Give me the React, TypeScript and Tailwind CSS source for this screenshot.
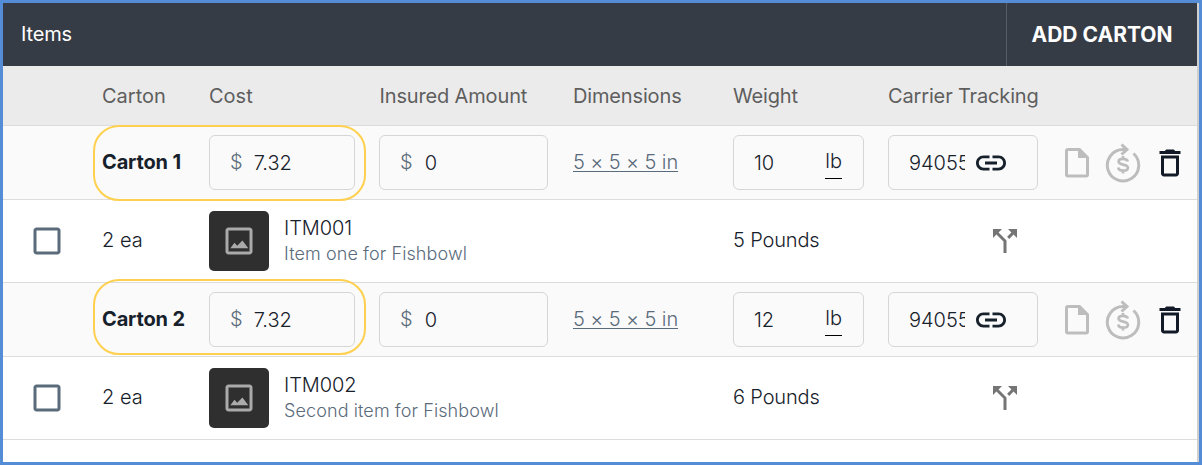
import React from "react";

const COLS = "grid grid-cols-[99px_107px_170px_194px_160px_155px_176px_1fr]";

function Icon({ d, className }: { d: string; className: string }) {
  return (
    <svg viewBox="0 0 24 24" width="36" height="36" fill="currentColor" className={`block shrink-0 ${className}`}>
      <path d={d} />
    </svg>
  );
}

const LINK =
  "M3.9 12c0-1.71 1.39-3.1 3.1-3.1h4V7H7c-2.76 0-5 2.24-5 5s2.24 5 5 5h4v-1.9H7c-1.71 0-3.1-1.39-3.1-3.1zM8 13h8v-2H8v2zm9-6h-4v1.9h4c1.71 0 3.1 1.39 3.1 3.1s-1.39 3.1-3.1 3.1h-4V17h4c2.76 0 5-2.24 5-5s-2.24-5-5-5z";
const SPLIT =
  "M14 4l2.29 2.29-2.88 2.88 1.42 1.42 2.88-2.88L20 10V4zm-4 0H4v6l2.29-2.29 4.71 4.7V20h2v-8.41l-5.29-5.3z";
const BOX =
  "M19 5v14H5V5h14m0-2H5c-1.1 0-2 .9-2 2v14c0 1.1.9 2 2 2h14c1.1 0 2-.9 2-2V5c0-1.1-.9-2-2-2z";
const MOUNTAINS = "M6.200 16.900L9 13.100l1.800 2.100 3.500-3.600 3.900 5.300z";
const TRASH =
  "M6 19c0 1.100.9 2 2 2h8c1.100 0 2-.9 2-2V7H6v12zM8 9h8v10H8V9zm7.500-5l-1-1h-5l-1 1H5v2h14V4h-3.500z";

function DocIcon() {
  return (
    <svg viewBox="0 0 26 32" width="26" height="32" fill="none" className="block text-[#bdbdbd]">
      <path d="M4 2.500h11.500L23.500 10.500V27.500a1.500 1.500 0 0 1-1.500 1.500H4a1.500 1.500 0 0 1-1.500-1.500V4A1.500 1.500 0 0 1 4 2.500z" stroke="currentColor" strokeWidth="3" />
      <path d="M14 1l11 10H14z" fill="currentColor" />
    </svg>
  );
}

function RefundIcon() {
  return (
    <svg viewBox="0 0 36 40" width="36" height="40" fill="none" stroke="currentColor" strokeWidth="3" className="block text-[#bdbdbd]">
      <path d="M28.500 10.500A15.700 15.700 0 1 1 18 6.500h4" />
      <path d="M16.500 1.500l5.500 5-5.500 5" />
      <path d="M22.800 18.500c-.5-1.800-2.200-2.700-4.800-2.700-2.800 0-4.400 1-4.400 2.700 0 4.200 9.300 1.900 9.300 6.200 0 1.900-1.800 2.900-4.800 2.900-2.900 0-4.600-1.100-4.900-3.100M18 13v3M18 27.500v3" strokeWidth="2.700" />
    </svg>
  );
}

function Field({ width, children }: { width: string; children: React.ReactNode }) {
  return (
    <div className={`flex h-[55px] items-center rounded-[6px] border border-[#d6d6d6] bg-[#fafafa] pl-5 ${width}`}>
      {children}
    </div>
  );
}

function CartonRow({ name, weight, highlight }: { name: string; weight: string; highlight: string }) {
  return (
    <div className={`${COLS} relative h-[74px] items-center border-b border-[#dcdcdc] bg-[#fafafa]`}>
      <div />
      <div className="pb-[2px] font-bold tracking-[-0.15px]">{name}</div>
      <Field width="w-[146px]">
        <span className="pb-[2px] text-[#5a6b7b]">$</span>
        <span className="ml-[11px]">7.32</span>
      </Field>
      <Field width="w-[169px]">
        <span className="pb-[2px] text-[#5a6b7b]">$</span>
        <span className="ml-3">0</span>
      </Field>
      <div className="pb-[2px] tracking-[-0.1px] text-[#5a6b7b]">
        <span className="underline decoration-1 underline-offset-2">5 × 5 × 5 in</span>
      </div>
      <Field width="w-[131px]">
        <span>{weight}</span>
        <span className="mr-[21px] ml-auto border-b border-black pb-[2px]">lb</span>
      </Field>
      <Field width="w-[150px]">
        <span className="w-[56px] overflow-hidden">94055</span>
        <Icon d={LINK} className="ml-2 text-[#17212b]" />
      </Field>
      <div className="flex items-center">
        <DocIcon />
        <div className="ml-[15px]">
          <RefundIcon />
        </div>
        <Icon d={TRASH} className="ml-[11px] text-[#111a26]" />
      </div>
      <div className={`pointer-events-none absolute left-[89.500px] h-[76px] w-[273px] rounded-[26px] border-2 border-[#ffd04f] ${highlight}`} />
    </div>
  );
}

function ItemRow({ sku, description, weight }: { sku: string; description: string; weight: string }) {
  return (
    <div className={`${COLS} h-[83px] items-center border-b border-[#dcdcdc] bg-white`}>
      <Icon d={BOX} className="ml-[26px] text-[#5a6b7b]" />
      <div className="pb-[2px]">2 ea</div>
      <div className="col-span-3 flex items-center">
        <div className="flex size-[60px] items-center justify-center rounded-[5px] bg-[#2f2f2f]">
          <Icon d={`${BOX} ${MOUNTAINS}`} className="text-[#aaaaaa]" />
        </div>
        <div className="ml-[15px] pb-[2px]">
          <div className="leading-[26px] tracking-[-0.1px]">{sku}</div>
          <div className="text-[18px] leading-[25px] tracking-[0.1px] text-[#5a6b7b]">{description}</div>
        </div>
      </div>
      <div className="pb-[2px] tracking-[-0.15px]">{weight}</div>
      <Icon d={SPLIT} className="ml-[99px] text-[#757575]" />
    </div>
  );
}

export default function App() {
  return (
    <div className="h-[465px] w-[1202px] overflow-hidden border-[3px] border-[#548dd6] bg-white font-['Inter',sans-serif] text-[20px] leading-[30px] font-light whitespace-nowrap text-[#17212b]">
      <div className="h-full border-r-2 border-[#cfcfcf]">
        <header className="flex h-[63px] items-center justify-between bg-[#363c45] font-normal text-white">
          <div className="pb-[2px] pl-[18px] tracking-[-0.15px]">Items</div>
          <button className="h-full w-[191px] border-l border-[#5a5d64] text-[21px] font-bold">ADD CARTON</button>
        </header>
        <div className={`${COLS} h-[60px] items-center border-b border-[#dcdcdc] bg-[#ebebeb] font-normal tracking-[-0.15px] text-[#5e5e5e]`}>
          <div />
          <div className="tracking-normal">Carton</div>
          <div className="tracking-normal">Cost</div>
          <div className="pl-[0.500px]">Insured Amount</div>
          <div>Dimensions</div>
          <div>Weight</div>
          <div>Carrier Tracking</div>
        </div>
        <CartonRow name="Carton 1" weight="10" highlight="-top-px" />
        <ItemRow sku="ITM001" description="Item one for Fishbowl" weight="5 Pounds" />
        <CartonRow name="Carton 2" weight="12" highlight="-top-1" />
        <ItemRow sku="ITM002" description="Second item for Fishbowl" weight="6 Pounds" />
      </div>
    </div>
  );
}
